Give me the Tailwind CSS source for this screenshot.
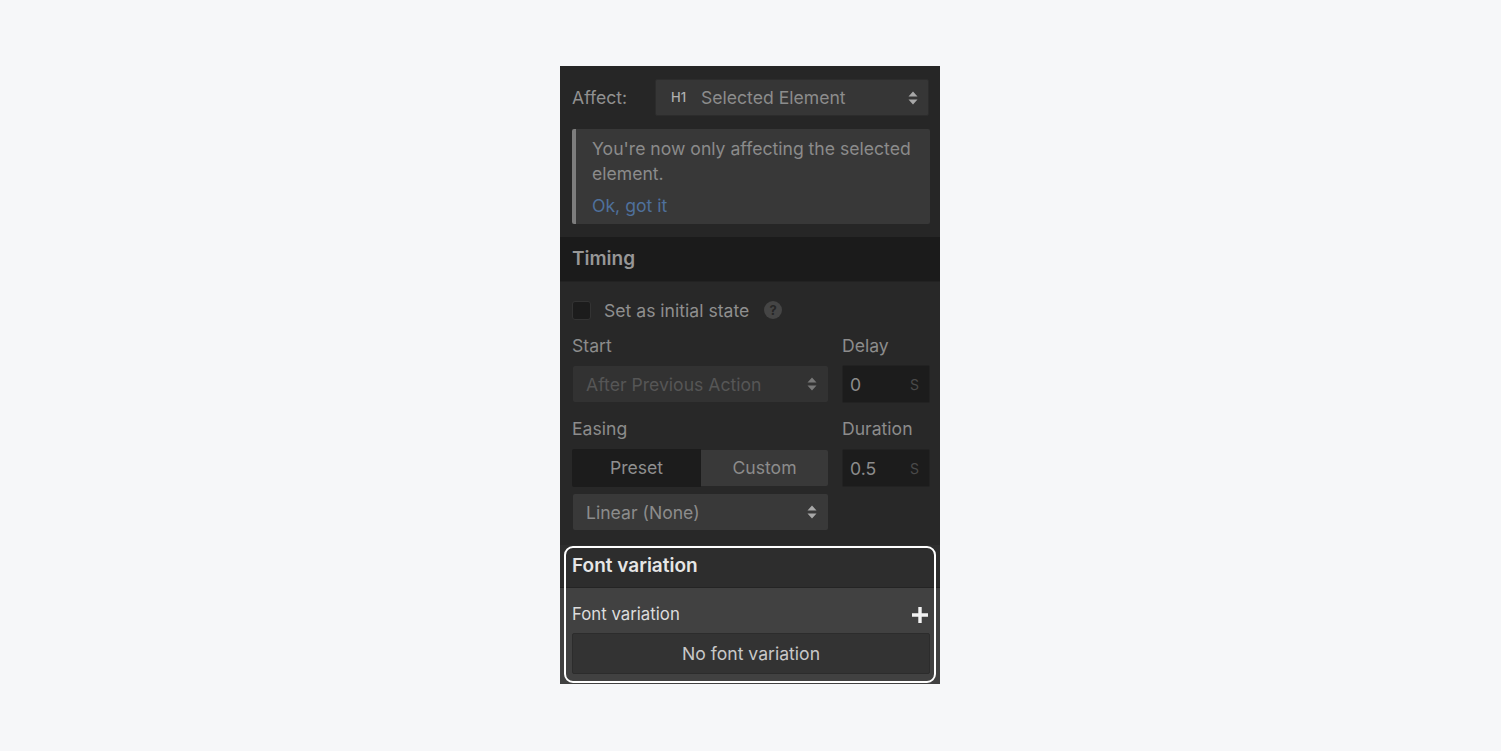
<!DOCTYPE html>
<html><head><meta charset="utf-8">
<script src="https://cdn.jsdelivr.net/npm/@tailwindcss/browser@4"></script>
</head>
<body class="w-[1501px] h-[751px] bg-[#f6f7f9] overflow-hidden font-['Inter','Liberation_Sans',sans-serif]">
<div class="flex justify-center pt-[66px] pr-px">
<div class="relative w-[380px] h-[618px] flex flex-col bg-[#262626] text-[17.6px] leading-[25px] text-[#8f8f8f]">
  <section class="h-[171px] pl-3 pr-[10px] pt-[13px] flex flex-col">
    <div class="flex items-center h-[37px]">
      <span class="w-[83px] text-[#919191]">Affect:</span>
      <div class="w-[274px] h-[37px] bg-[#363636] border border-[#2c2c2c] rounded-[2px] flex items-center pl-[15px] pr-[10px]">
        <span class="w-[30px] text-[13px] font-medium text-[#b0b0b0]">H1</span>
        <span class="flex-1 text-[#8c8c8c]">Selected Element</span>
        <svg class="w-[10px] h-[14px]" viewBox="0 0 10 14"><path d="M5 0.5 9.5 5.5H.5zM5 13.5.5 8.5H9.5z" fill="#a8a8a8"/></svg>
      </div>
    </div>
    <div class="mt-[13px] w-[358px] h-[95px] bg-[#383838] rounded-[2px] border-l-[4px] border-[#7d7d7d] pl-4 pt-[7px] text-[#8b8b8b]">
      <p>You're now only affecting the selected element.</p>
      <p class="mt-[7px] text-[#4f709c]">Ok, got it</p>
    </div>
  </section>
  <header class="h-[45px] bg-[#1b1b1b] border-b border-[#222] px-3 pb-[2px] flex items-center font-semibold text-[#979797] text-[19px]">Timing</header>
  <section class="h-[263px] bg-[#282828] pl-3 pr-[10px] flex flex-col">
    <div class="flex items-center h-[20px] mt-[18px]">
      <span class="w-[19px] h-[19px] bg-[#1c1c1c] border border-[#333] rounded-[3px]"></span>
      <span class="ml-[13px] text-[#8f8f8f]">Set as initial state</span>
      <span class="ml-[15px] w-[18px] h-[18px] rounded-full bg-[#454545] text-[#262626] text-[13px] font-bold leading-[18px] text-center">?</span>
    </div>
    <div class="grid grid-cols-[256px_88px] gap-x-[14px] mt-[13px]">
      <div class="flex flex-col">
        <span class="h-[25px] text-[#8c8c8c]">Start</span>
        <div class="mt-[8px] h-[36px] ml-px bg-[#323232] rounded-[2px] flex items-center pl-[13px] pr-[11px]">
          <span class="flex-1 text-[#565656]">After Previous Action</span>
          <svg class="w-[10px] h-[14px]" viewBox="0 0 10 14"><path d="M5 0.5 9.5 5.5H.5zM5 13.5.5 8.5H9.5z" fill="#787878"/></svg>
        </div>
      </div>
      <div class="flex flex-col">
        <span class="h-[25px] text-[#8c8c8c]">Delay</span>
        <div class="mt-[7px] h-[38px] bg-[#1c1c1c] border border-[#222] rounded-[2px] flex items-center pl-[7px] pr-[10px]">
          <span class="flex-1 text-[#8c8c8c]">0</span><span class="text-[14px] text-[#4a4a4a]">S</span>
        </div>
      </div>
    </div>
    <div class="grid grid-cols-[256px_88px] gap-x-[14px] mt-[13px]">
      <div class="flex flex-col">
        <span class="h-[25px] text-[#8c8c8c]">Easing</span>
        <div class="mt-[8px] h-[38px] flex text-center leading-[38px]">
          <span class="w-[129px] bg-[#1c1c1c] rounded-l-[2px] text-[#8f8f8f]">Preset</span>
          <span class="flex-1 bg-[#393939] rounded-r-[2px] my-px leading-[36px] text-[#8c8c8c]">Custom</span>
        </div>
        <div class="mt-[7px] h-[36px] ml-px bg-[#393939] rounded-[2px] flex items-center pl-[13px] pr-[11px]">
          <span class="flex-1 text-[#8c8c8c]">Linear (None)</span>
          <svg class="w-[10px] h-[14px]" viewBox="0 0 10 14"><path d="M5 0.5 9.5 5.5H.5zM5 13.5.5 8.5H9.5z" fill="#a8a8a8"/></svg>
        </div>
      </div>
      <div class="flex flex-col">
        <span class="h-[25px] text-[#8c8c8c]">Duration</span>
        <div class="mt-[8px] h-[38px] bg-[#1c1c1c] border border-[#222] rounded-[2px] flex items-center pl-[7px] pr-[10px]">
          <span class="flex-1 text-[#8c8c8c]">0.5</span><span class="text-[14px] text-[#4a4a4a]">S</span>
        </div>
      </div>
    </div>
  </section>
  <header class="h-[43px] bg-[#2d2d2d] border-b border-[#242424] px-3 pb-[2px] flex items-center font-semibold text-[#e6e6e6] text-[19px]">Font variation</header>
  <section class="flex-1 bg-[#414141] pl-3 pr-[10px] flex flex-col">
    <div class="flex items-center justify-between h-[45px] pt-[8px] text-[16.8px] text-[#dcdcdc]">
      <span>Font variation</span>
      <svg class="w-4 h-4 mr-[2px]" viewBox="0 0 16 16"><path d="M8 0v16M0 8h16" stroke="#f2f2f2" stroke-width="3.4"/></svg>
    </div>
    <div class="h-[41px] bg-[#333] border border-[#2c2c2c] rounded-[2px] text-center leading-[40px] text-[#c8c8c8]">No font variation</div>
  </section>
  <div class="absolute left-[4px] top-[480px] w-[372px] h-[137px] border-2 border-white rounded-[9px]"></div>
</div>
</div>
</body></html>
